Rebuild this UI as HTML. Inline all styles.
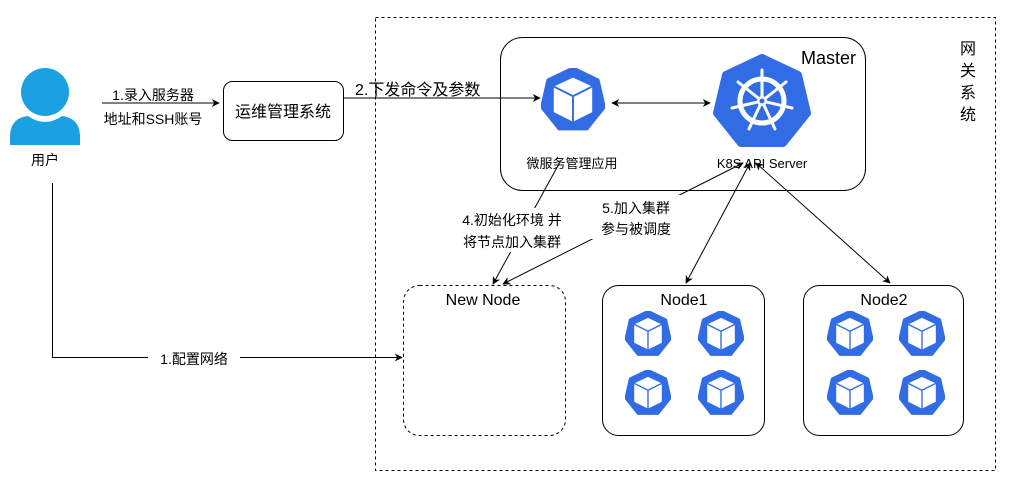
<!DOCTYPE html>
<html><head><meta charset="utf-8"><style>
html,body{margin:0;padding:0;background:#fff;}
svg{display:block;font-family:"Liberation Sans","Noto Sans CJK SC",sans-serif;}
</style></head><body>
<svg width="1010" height="487" viewBox="0 0 1010 487" xmlns="http://www.w3.org/2000/svg">
<defs>
<marker id="ah" viewBox="0 0 10 10" refX="9" refY="5" markerWidth="8" markerHeight="8" orient="auto-start-reverse" markerUnits="userSpaceOnUse"><path d="M0,0 L10,5 L0,10 L3,5 z" fill="#000"/></marker>
<symbol id="pod" viewBox="-1 -1 2 2">
<polygon points="0,-1 0.782,-0.623 0.975,0.223 0.434,0.901 -0.434,0.901 -0.975,0.223 -0.782,-0.623" fill="#326ce5" stroke="#326ce5" stroke-width="0.1" stroke-linejoin="round"/>
<polygon points="0,-0.7 0.6,-0.42 0.6,0.38 0,0.68 -0.6,0.38 -0.6,-0.42" fill="#fff"/>
<path d="M-0.6,-0.42 L0,-0.12 L0.6,-0.42 M0,-0.12 L0,0.68" stroke="#326ce5" stroke-width="0.06" fill="none"/>
</symbol>
</defs>
<rect x="375.5" y="17.5" width="620" height="453" fill="none" stroke="#000" stroke-dasharray="3,3"/>
<g font-size="16" text-anchor="middle"><text x="968" y="54">网</text><text x="968" y="76">关</text><text x="968" y="98">系</text><text x="968" y="120">统</text></g>
<rect x="500.5" y="37.5" width="365" height="153" rx="22" fill="none" stroke="#000"/>
<text x="856" y="64" font-size="18" text-anchor="end">Master</text>
<use href="#pod" x="541" y="68" width="64" height="64"/>
<text x="572" y="168" font-size="13" text-anchor="middle">微服务管理应用</text>
<polygon points="762,58 798,75 807,113 783,143 741,143 717,113 726,75" fill="#326ce5" stroke="#326ce5" stroke-width="8" stroke-linejoin="round"/>
<circle cx="762" cy="101" r="22" stroke="#fff" fill="none" stroke-width="5"/>
<g stroke="#fff" stroke-width="3" stroke-linecap="round">
<line x1="762" y1="101" x2="762" y2="70"/><line x1="762" y1="101" x2="786" y2="82"/><line x1="762" y1="101" x2="792" y2="108"/><line x1="762" y1="101" x2="775" y2="129"/><line x1="762" y1="101" x2="749" y2="129"/><line x1="762" y1="101" x2="732" y2="108"/><line x1="762" y1="101" x2="738" y2="82"/>
</g>
<circle cx="762" cy="101" r="5" fill="#fff"/>
<circle cx="762" cy="101" r="2.5" fill="#326ce5"/>
<text x="762" y="168" font-size="13" text-anchor="middle">K8S API Server</text>
<line x1="612" y1="103" x2="710" y2="103" stroke="#000" marker-start="url(#ah)" marker-end="url(#ah)"/>
<circle cx="45" cy="92" r="24" fill="#1ba1e2"/>
<path d="M10,145 L10,135 Q11,118 28,116 Q45,128 62,116 Q79,118 80,135 L80,145 Z" fill="#1ba1e2"/>
<text x="45" y="165" font-size="14" text-anchor="middle">用户</text>
<line x1="102" y1="103" x2="219" y2="103" stroke="#000" marker-end="url(#ah)"/>
<text x="153" y="100" font-size="14" text-anchor="middle">1.录入服务器</text>
<text x="153" y="124" font-size="14" text-anchor="middle">地址和SSH账号</text>
<rect x="223.5" y="81.5" width="120" height="59" rx="9" fill="#fff" stroke="#000"/>
<text x="283" y="117" font-size="16" text-anchor="middle">运维管理系统</text>
<line x1="343" y1="98" x2="540" y2="98" stroke="#000" marker-end="url(#ah)"/>
<text x="355" y="95" font-size="16">2.下发命令及参数</text>
<polyline points="52.5,183 52.5,357.5 402,357.5" fill="none" stroke="#000" marker-end="url(#ah)"/>
<rect x="148" y="348" width="92" height="20" fill="#fff"/>
<text x="194" y="364" font-size="14" text-anchor="middle">1.配置网络</text>
<rect x="403.5" y="285.5" width="162" height="150" rx="16" fill="none" stroke="#000" stroke-dasharray="3,3"/>
<text x="483" y="305" font-size="16" text-anchor="middle">New Node</text>
<rect x="602.5" y="285.5" width="162" height="150" rx="16" fill="none" stroke="#000"/>
<text x="684" y="305" font-size="16" text-anchor="middle">Node1</text>
<rect x="803.5" y="285.5" width="160" height="150" rx="16" fill="none" stroke="#000"/>
<text x="884" y="305" font-size="16" text-anchor="middle">Node2</text>
<use href="#pod" x="625" y="311" width="46" height="46"/>
<use href="#pod" x="698" y="311" width="46" height="46"/>
<use href="#pod" x="625" y="370" width="46" height="46"/>
<use href="#pod" x="698" y="370" width="46" height="46"/>
<use href="#pod" x="827" y="311" width="46" height="46"/>
<use href="#pod" x="899" y="311" width="46" height="46"/>
<use href="#pod" x="827" y="370" width="46" height="46"/>
<use href="#pod" x="899" y="370" width="46" height="46"/>
<line x1="560" y1="162" x2="493" y2="284" stroke="#000" marker-end="url(#ah)"/>
<line x1="743" y1="163" x2="503" y2="284" stroke="#000" marker-start="url(#ah)" marker-end="url(#ah)"/>
<line x1="750" y1="163" x2="686" y2="283" stroke="#000" marker-start="url(#ah)" marker-end="url(#ah)"/>
<line x1="756" y1="163" x2="890" y2="283" stroke="#000" marker-start="url(#ah)" marker-end="url(#ah)"/>
<rect x="460" y="208" width="104" height="44" fill="#fff"/>
<text x="512" y="225" font-size="14" text-anchor="middle">4.初始化环境 并</text>
<text x="512" y="247" font-size="14" text-anchor="middle">将节点加入集群</text>
<rect x="590" y="195" width="92" height="44" fill="#fff"/>
<text x="636" y="213" font-size="14" text-anchor="middle">5.加入集群</text>
<text x="636" y="234" font-size="14" text-anchor="middle">参与被调度</text>
</svg>
</body></html>
